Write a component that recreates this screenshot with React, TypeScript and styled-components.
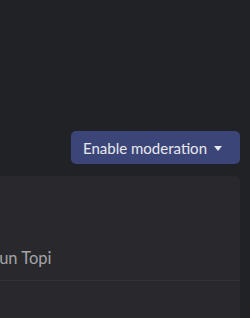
import React from "react";
import styled, { createGlobalStyle } from "styled-components";

const GlobalStyle = createGlobalStyle`
  html, body {
    margin: 0;
    padding: 0;
    background: #212226;
  }
  body {
    font-family: Lato, "Noto Sans", sans-serif;
  }
`;

const Page = styled.div`
  width: 250px;
  height: 318px;
  overflow: hidden;
  display: flex;
  flex-direction: column;
  align-items: flex-end;
  padding: 131px 10px 0 0;
  box-sizing: border-box;
  background: #212226;
`;

const Toolbar = styled.div`
  display: flex;
  justify-content: flex-end;
  width: 100%;
`;

const DropButton = styled.button`
  display: flex;
  align-items: center;
  gap: 7px;
  height: 33px;
  padding: 0 18px 0 12px;
  border: none;
  border-radius: 5px;
  background: #3b4577;
  color: #e8e9f0;
  font-family: Lato, "Noto Sans", sans-serif;
  font-size: 15px;
  cursor: pointer;
`;

const Caret = styled.span`
  width: 0;
  height: 0;
  border-left: 4px solid transparent;
  border-right: 4px solid transparent;
  border-top: 5px solid #e8e9f0;
  margin-top: 1px;
`;

const Card = styled.div`
  flex: 1;
  display: flex;
  flex-direction: column;
  width: 274px;
  flex-shrink: 0;
  margin-top: 12px;
  background: #29292d;
  border-radius: 5px 5px 0 0;
`;

const Row = styled.div<{ $grow?: boolean }>`
  display: flex;
  align-items: flex-end;
  padding: ${({ $grow }) => ($grow ? "0" : "68px 16px 8px")};
  flex: ${({ $grow }) => ($grow ? 1 : "none")};
  border-bottom: ${({ $grow }) => ($grow ? "none" : "1px solid #323337")};
`;

const Name = styled.span`
  font-size: 16.5px;
  line-height: 28px;
  color: #a3a4a8;
`;

export default function App() {
  return (
    <>
      <GlobalStyle />
      <Page>
        <Toolbar>
          <DropButton>
            Enable moderation
            <Caret />
          </DropButton>
        </Toolbar>
        <Card>
          <Row>
            <Name>Arun Topi</Name>
          </Row>
          <Row $grow />
        </Card>
      </Page>
    </>
  );
}
